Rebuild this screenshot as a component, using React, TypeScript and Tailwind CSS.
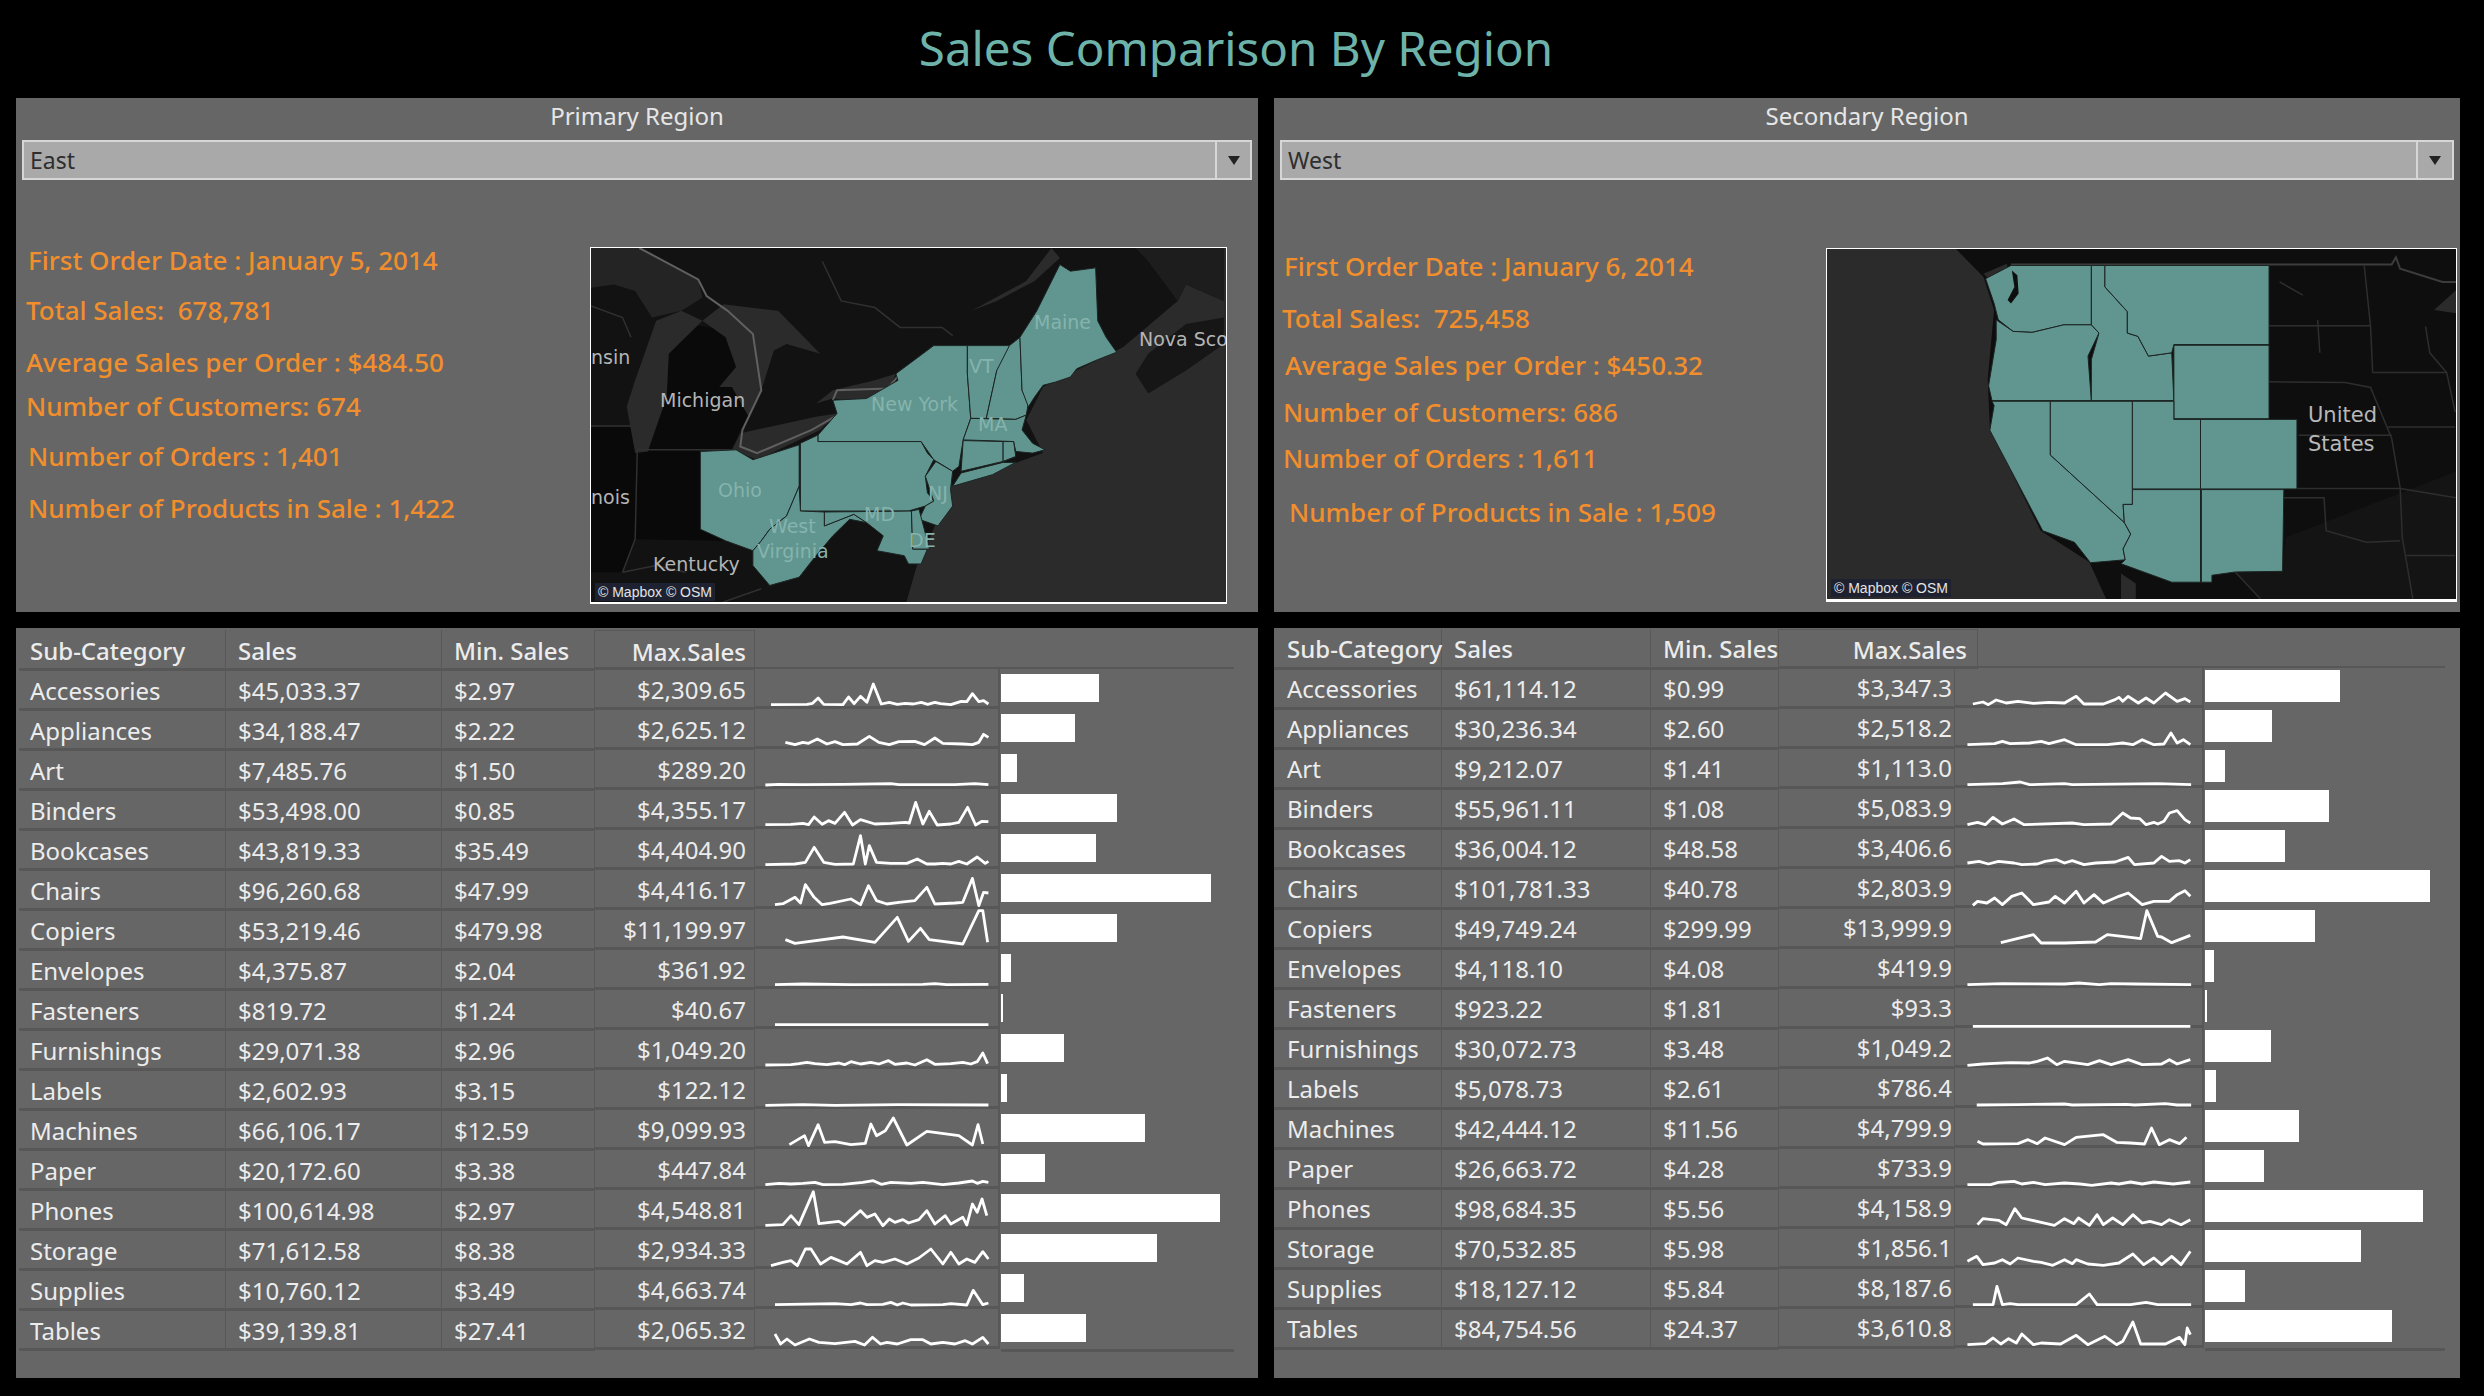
import React from 'react';

type Row = { name: string; sales: string; min: string; max: string; spark: string };

const eastRows: Row[] = [
  { name: 'Accessories', sales: '$45,033.37', min: '$2.97', max: '$2,309.65', spark: '960,107 1005,106 1012,103 1019,87 1026,106 1050,107 1057,84 1064,104 1072,82 1080,100 1088,45 1098,105 1108,100 1118,106 1128,103 1138,105 1148,100 1156,106 1165,100 1172,104 1185,107 1198,97 1205,98 1212,74 1220,98 1226,95 1232,105' },
  { name: 'Appliances', sales: '$34,188.47', min: '$2.22', max: '$2,625.12', spark: '978,100 990,107 1000,100 1007,103 1018,90 1030,105 1040,98 1050,107 1068,105 1083,82 1095,100 1108,107 1120,98 1140,97 1152,107 1165,87 1175,103 1200,105 1212,107 1220,100 1226,76 1232,85' },
  { name: 'Art', sales: '$7,485.76', min: '$1.50', max: '$289.20', spark: '953,108 970,106 1000,107 1050,106 1110,104 1120,107 1190,107 1215,104 1232,107' },
  { name: 'Binders', sales: '$53,498.00', min: '$0.85', max: '$4,355.17', spark: '953,107 985,106 1000,103 1007,107 1014,84 1024,106 1032,95 1040,103 1052,70 1062,108 1072,92 1090,105 1110,103 1128,100 1133,102 1141,40 1150,105 1158,67 1168,108 1185,105 1195,100 1206,55 1216,108 1224,97 1232,98' },
  { name: 'Bookcases', sales: '$43,819.33', min: '$35.49', max: '$4,404.90', spark: '953,107 990,105 1003,100 1014,55 1026,100 1040,106 1063,105 1072,20 1078,105 1083,50 1092,100 1110,103 1130,103 1143,90 1155,105 1165,105 1175,103 1185,105 1195,97 1205,105 1218,84 1228,103 1232,97' },
  { name: 'Chairs', sales: '$96,260.68', min: '$47.99', max: '$4,416.17', spark: '965,107 975,104 990,85 997,102 1003,47 1014,85 1024,107 1034,103 1060,90 1072,107 1082,50 1092,95 1105,105 1120,100 1140,95 1155,55 1165,105 1190,102 1200,100 1212,28 1220,110 1226,70 1232,72' },
  { name: 'Copiers', sales: '$53,219.46', min: '$479.98', max: '$11,199.97', spark: '978,92 990,103 1050,84 1090,100 1118,25 1132,97 1147,58 1158,92 1200,105 1220,5 1225,5 1231,100' },
  { name: 'Envelopes', sales: '$4,375.87', min: '$2.04', max: '$361.92', spark: '965,107 1000,105 1060,107 1150,106 1165,104 1180,107 1232,106' },
  { name: 'Fasteners', sales: '$819.72', min: '$1.24', max: '$40.67', spark: '965,107 1232,107' },
  { name: 'Furnishings', sales: '$29,071.38', min: '$2.96', max: '$1,049.20', spark: '953,108 985,107 995,104 1005,100 1015,104 1030,107 1045,102 1052,107 1060,98 1072,105 1085,100 1095,105 1107,95 1115,106 1130,102 1140,108 1155,92 1165,106 1185,104 1200,100 1210,105 1218,98 1225,72 1231,104' },
  { name: 'Labels', sales: '$2,602.93', min: '$3.15', max: '$122.12', spark: '953,109 1000,107 1040,109 1120,107 1232,108' },
  { name: 'Machines', sales: '$66,106.17', min: '$12.59', max: '$9,099.93', spark: '983,107 1002,80 1007,110 1019,47 1027,100 1040,98 1060,107 1078,103 1085,45 1092,80 1103,65 1113,27 1130,108 1155,67 1195,80 1212,108 1219,47 1225,105' },
  { name: 'Paper', sales: '$20,172.60', min: '$3.38', max: '$447.84', spark: '953,107 970,103 985,105 1000,103 1015,100 1025,107 1050,106 1075,100 1088,95 1098,106 1110,100 1135,103 1150,100 1175,107 1195,102 1212,96 1218,103 1225,97 1232,100' },
  { name: 'Phones', sales: '$100,614.98', min: '$2.97', max: '$4,548.81', spark: '953,109 975,107 985,80 995,107 1013,8 1020,104 1045,97 1052,108 1072,65 1080,85 1090,75 1100,110 1108,90 1115,100 1125,92 1132,102 1145,92 1155,65 1165,105 1178,80 1185,105 1200,85 1205,108 1212,45 1218,70 1224,30 1230,80' },
  { name: 'Storage', sales: '$71,612.58', min: '$8.38', max: '$2,934.33', spark: '960,110 975,100 985,95 993,110 1003,60 1010,60 1022,105 1035,85 1045,95 1055,105 1072,70 1080,110 1090,95 1100,100 1115,90 1130,105 1145,87 1160,60 1175,105 1185,70 1195,105 1205,90 1215,100 1225,68 1232,90' },
  { name: 'Supplies', sales: '$10,760.12', min: '$3.49', max: '$4,663.74', spark: '965,107 1040,104 1060,107 1072,102 1080,107 1100,106 1110,100 1118,108 1125,102 1135,108 1175,107 1185,104 1205,108 1213,64 1225,107 1232,102' },
  { name: 'Tables', sales: '$39,139.81', min: '$27.41', max: '$2,065.32', spark: '965,75 972,105 980,90 990,108 1008,90 1020,100 1040,104 1065,97 1077,108 1087,85 1097,105 1105,100 1118,105 1135,92 1150,92 1160,105 1175,100 1190,105 1203,95 1212,105 1225,85 1232,105' },
];

const westRows: Row[] = [
  { name: 'Accessories', sales: '$61,114.12', min: '$0.99', max: '$3,347.3', spark: '912,108 925,102 932,110 942,96 955,105 970,100 990,106 1010,103 1030,105 1045,85 1055,108 1080,108 1095,95 1100,88 1105,100 1112,85 1125,105 1135,90 1145,105 1160,75 1175,100 1185,92 1192,102' },
  { name: 'Appliances', sales: '$30,236.34', min: '$2.60', max: '$2,518.2', spark: '905,110 940,107 950,100 960,107 985,105 1000,100 1010,107 1030,95 1045,110 1085,110 1105,105 1118,110 1130,95 1145,110 1158,108 1167,75 1175,105 1183,95 1192,110' },
  { name: 'Art', sales: '$9,212.07', min: '$1.41', max: '$1,113.0', spark: '905,110 950,107 973,102 985,110 1030,107 1040,110 1150,107 1193,110' },
  { name: 'Binders', sales: '$55,961.11', min: '$1.08', max: '$5,083.9', spark: '905,110 918,103 928,110 938,88 950,108 965,93 978,110 1040,105 1055,110 1090,108 1105,75 1115,90 1127,92 1135,110 1145,103 1150,108 1158,100 1165,75 1175,68 1185,95 1192,105' },
  { name: 'Bookcases', sales: '$36,004.12', min: '$48.58', max: '$3,406.6', spark: '905,105 920,100 932,108 945,100 965,105 975,110 995,108 1005,100 1020,95 1030,105 1040,98 1055,110 1070,105 1095,102 1112,88 1120,110 1145,105 1155,85 1165,100 1178,98 1185,105 1192,95' },
  { name: 'Chairs', sales: '$101,781.33', min: '$40.78', max: '$2,803.9', spark: '912,112 918,100 930,105 940,90 950,110 962,85 975,75 990,110 1010,102 1018,85 1030,105 1045,70 1055,105 1068,80 1080,105 1100,85 1112,75 1130,110 1145,100 1165,100 1175,80 1185,68 1192,85' },
  { name: 'Copiers', sales: '$49,749.24', min: '$299.99', max: '$13,999.9', spark: '948,104 990,80 1000,105 1030,105 1070,102 1085,80 1115,88 1128,92 1136,8 1150,85 1155,87 1168,104 1192,82' },
  { name: 'Envelopes', sales: '$4,118.10', min: '$4.08', max: '$419.9', spark: '905,110 950,107 1030,108 1048,105 1075,110 1090,107 1120,108 1193,110' },
  { name: 'Fasteners', sales: '$923.22', min: '$1.81', max: '$93.3', spark: '912,115 1192,115' },
  { name: 'Furnishings', sales: '$30,072.73', min: '$3.48', max: '$1,049.2', spark: '905,112 925,108 940,106 960,104 985,105 995,100 1008,90 1020,110 1030,100 1060,110 1075,98 1090,110 1112,95 1130,110 1155,108 1165,95 1175,108 1185,100 1192,95' },
  { name: 'Labels', sales: '$5,078.73', min: '$2.61', max: '$786.4', spark: '917,111 970,110 1030,108 1040,111 1110,109 1120,111 1160,107 1175,111 1193,111' },
  { name: 'Machines', sales: '$42,444.12', min: '$11.56', max: '$4,799.9', spark: '918,100 925,108 970,107 983,95 995,107 1005,90 1030,110 1045,88 1080,80 1097,103 1115,105 1133,108 1142,60 1152,110 1165,95 1178,107 1187,88' },
  { name: 'Paper', sales: '$26,663.72', min: '$4.28', max: '$733.9', spark: '905,110 935,110 945,103 965,100 975,108 990,103 1005,110 1030,105 1050,108 1065,112 1090,105 1100,108 1115,102 1130,108 1145,102 1170,108 1192,102' },
  { name: 'Phones', sales: '$98,684.35', min: '$5.56', max: '$4,158.9', spark: '918,110 925,92 945,97 955,110 966,62 975,90 1000,103 1017,112 1030,92 1042,107 1048,90 1062,112 1072,80 1080,110 1092,90 1105,110 1118,80 1130,105 1140,100 1155,110 1165,95 1180,110 1192,95' },
  { name: 'Storage', sales: '$70,532.85', min: '$5.98', max: '$1,856.1', spark: '905,100 917,85 925,110 940,105 950,95 960,108 970,90 990,100 1000,103 1015,112 1030,95 1040,107 1045,95 1060,108 1080,112 1100,105 1118,78 1132,110 1145,90 1155,110 1168,85 1180,110 1192,70' },
  { name: 'Supplies', sales: '$18,127.12', min: '$5.84', max: '$8,187.6', spark: '912,110 938,110 943,55 950,110 960,107 970,110 1045,110 1062,78 1072,110 1115,110 1135,103 1150,110 1193,110' },
  { name: 'Tables', sales: '$84,754.56', min: '$24.37', max: '$3,610.8', spark: '905,110 928,107 938,90 948,108 958,92 968,105 975,78 990,110 1000,105 1025,108 1045,82 1060,110 1082,85 1097,110 1105,100 1118,42 1128,108 1160,108 1178,88 1185,110 1188,60 1192,80' },
];

const sans = 'font-["Noto_Sans",sans-serif]';

function Stat({ className, children }: { className: string; children: React.ReactNode }) {
  return <div className={`h-10 leading-[40px] text-[26px] font-medium whitespace-nowrap text-[#f28e2b] ${className}`}>{children}</div>;
}

function RegionSelect({ value, arrowClass }: { value: string; arrowClass: string }) {
  return (
    <div className="flex h-10 border-2 border-[#d6d6d6] bg-[#a9a9a9] text-[23px] leading-[36px] text-[#2e2e2e]">
      <div className="flex-1 pl-[6px]">{value}</div>
      <div className={`flex items-center justify-center border-l-2 border-[#d6d6d6] ${arrowClass}`}>
        <svg width="12" height="10" viewBox="0 0 12 10"><path d="M0 1h12L6 10z" fill="#222" /></svg>
      </div>
    </div>
  );
}

function MapLabel({ className, children }: { className: string; children: React.ReactNode }) {
  return <span className={`absolute font-["DejaVu_Sans",sans-serif] whitespace-nowrap leading-none ${className}`}>{children}</span>;
}

function Attribution({ className }: { className: string }) {
  return (
    <div className={`absolute left-[4px] flex h-[18px] w-[120px] items-center justify-center bg-[#1d2130] font-["Liberation_Sans",sans-serif] text-[14px] text-[#e4e4e4] ${className}`}>
      © Mapbox © OSM
    </div>
  );
}

const teal = '#60968f';
const edge = '#1c2423';

function States({ shapes }: { shapes: string[] }) {
  return (
    <>
      {shapes.map((pts) => (
        <polygon key={pts} points={pts} fill={teal} stroke={edge} strokeWidth="1" vectorEffect="non-scaling-stroke" />
      ))}
    </>
  );
}

function Lines({ lines, color, width }: { lines: string[]; color: string; width: number }) {
  return (
    <>
      {lines.map((pts) => (
        <polyline key={pts} points={pts} fill="none" stroke={color} strokeWidth={width} vectorEffect="non-scaling-stroke" />
      ))}
    </>
  );
}

function EastMap() {
  return (
    <div className="relative h-[357px] w-[637px] shrink-0 overflow-hidden border border-b-2 border-white bg-[#2b2b2b]">
      <svg className="block h-full w-full" viewBox="25 20 1510 1070" preserveAspectRatio="none">
        <polygon points="25,20 1530,20 1530,180 1440,130 1420,180 1290,320 1100,440 1060,540 1100,640 880,740 830,900 800,980 775,1090 25,1090" fill="#121212" />
        <polygon points="25,560 135,560 135,630 285,630 285,870 345,905 130,900 100,1000 25,1000" fill="#090909" />
        <polygon points="210,240 400,280 430,450 380,570 360,630 135,630 205,470 210,340" fill="#0a0a0a" />
        <polygon points="1210,20 1530,20 1530,180 1440,130 1420,180 1350,60 1320,20" fill="#1d1d1d" />
        <polygon points="1530,230 1440,250 1350,340 1320,400 1350,460 1440,390 1530,310" fill="#161616" />
        <polygon points="1120,20 1060,120 930,210 990,180 1080,120 1140,50" fill="#2b2b2b" />
        <polygon points="25,20 140,20 280,115 290,170 240,210 170,230 130,150 80,130 25,140" fill="#242424" />
        <polygon points="180,240 130,420 110,500 130,640 160,635 205,470 210,340 290,240 240,210" fill="#2b2b2b" />
        <polygon points="290,240 340,190 470,210 540,300 570,340 490,310 460,330 430,450 400,530 360,440 330,440 370,380 345,290" fill="#2b2b2b" />
        <polygon points="560,490 600,450 700,420 750,400 730,460 690,485 600,475" fill="#2b2b2b" />
        <polygon points="360,630 380,580 560,530 610,520 570,570 420,660" fill="#2b2b2b" />
        <Lines color="#606060" width={2} lines={['140,20 280,115 300,165 350,210 410,280 430,450 385,570 380,620 420,640 550,570 605,530', '600,480 610,450 730,445 760,400']} />
        <Lines color="#303030" width={1.5} lines={['25,558 120,558', '135,630 360,630', '135,630 130,900 100,1000', '575,60 620,180 700,200 760,260 860,260 885,285', '25,195 100,230 120,290', '250,1000 180,980 100,1000', '430,1050 340,1090']} />
        <States shapes={[
          '285,635 370,630 410,660 520,615 520,740 490,830 450,870 430,905 410,935 345,905 285,870',
          '523,610 565,585 565,605 810,605 825,640 840,660 820,710 825,760 840,785 820,800 780,815 523,815',
          '565,605 565,585 610,520 600,480 680,475 755,420 750,400 840,315 920,315 920,400 928,535 910,600 900,680 885,695 840,660 810,605',
          '885,740 905,700 1005,668 1035,668 980,705',
          '920,315 1020,315 1020,350 990,390 965,535 928,535 920,400',
          '1020,315 1045,290 1050,450 1065,490 1060,525 1035,538 965,535 990,390',
          '1045,290 1085,210 1140,70 1165,90 1225,80 1230,240 1250,290 1275,335 1225,360 1180,385 1165,410 1130,425 1100,435 1080,470 1065,500 1050,450',
          '928,535 1035,538 1060,525 1050,570 1075,610 1105,630 1075,640 1035,635 1030,605 910,600',
          '910,602 1005,605 1005,665 905,695',
          '1005,605 1030,605 1035,650 1005,665',
          '845,665 885,695 880,750 885,800 850,860 805,840 820,800 840,785 820,710',
          '430,905 450,870 490,830 520,740 523,815 580,818 580,860 650,825 680,850 640,840 600,890 560,950 520,1015 450,1040 410,980 410,935',
          '580,818 787,815 790,930 825,930 810,975 780,975 770,950 705,935 720,890 680,850 650,825 580,860',
          '787,815 805,810 830,930 790,930',
        ]} />
      </svg>
      <MapLabel className="left-0 top-[100px] text-[19px] text-[#b4b4b4]">nsin</MapLabel>
      <MapLabel className="left-[69px] top-[143px] text-[19px] text-[#b4b4b4]">Michigan</MapLabel>
      <MapLabel className="left-[280px] top-[147px] text-[19px] text-[#86b3ad]">New York</MapLabel>
      <MapLabel className="left-[443px] top-[65px] text-[19px] text-[#86b3ad]">Maine</MapLabel>
      <MapLabel className="left-[548px] top-[82px] text-[19px] text-[#b4b4b4]">Nova Sco</MapLabel>
      <MapLabel className="left-[378px] top-[109px] text-[19px] text-[#86b3ad]">VT</MapLabel>
      <MapLabel className="left-[387px] top-[167px] text-[19px] text-[#86b3ad]">MA</MapLabel>
      <MapLabel className="left-[127px] top-[233px] text-[19px] text-[#86b3ad]">Ohio</MapLabel>
      <MapLabel className="left-0 top-[240px] text-[19px] text-[#b4b4b4]">nois</MapLabel>
      <MapLabel className="left-[178px] top-[269px] text-[19px] text-[#86b3ad]">West</MapLabel>
      <MapLabel className="left-[166px] top-[294px] text-[19px] text-[#86b3ad]">Virginia</MapLabel>
      <MapLabel className="left-[337px] top-[236px] text-[19px] text-[#86b3ad]">NJ</MapLabel>
      <MapLabel className="left-[273px] top-[257px] text-[19px] text-[#86b3ad]">MD</MapLabel>
      <MapLabel className="left-[318px] top-[283px] text-[19px] text-[#86b3ad]">DE</MapLabel>
      <MapLabel className="left-[62px] top-[307px] text-[19px] text-[#b4b4b4]">Kentucky</MapLabel>
      <Attribution className="top-[335px]" />
    </div>
  );
}

function WestMap() {
  return (
    <div className="relative h-[354px] w-[631px] shrink-0 overflow-hidden border border-b-[3px] border-white bg-[#2b2b2b]">
      <svg className="block h-full w-full" viewBox="15 25 1487 1062" preserveAspectRatio="none">
        <polygon points="320,25 1502,25 1502,1087 675,1087 635,975 520,880 400,570 395,420 410,210 385,110" fill="#0e0e0e" />
        <polygon points="1100,900 1502,700 1502,1087 1040,1087 980,1005 1092,1003" fill="#141414" />
        <polygon points="1450,210 1502,150 1502,220" fill="#2b2b2b" />
        <polygon points="710,1010 745,1040 745,1087 710,1087" fill="#2b2b2b" />
        <polygon points="385,100 440,70 450,125 400,120" fill="#2b2b2b" />
        <Lines color="#3c3c3c" width={2} lines={['450,72 1350,72 1360,50 1370,85 1470,125 1502,125']} />
        <Lines color="#2e2e2e" width={1.5} lines={[
          '1060,258 1300,258',
          '1060,428 1240,430 1300,445 1350,600 1370,750 1375,900 1400,1087',
          '1285,75 1300,260 1305,400',
          '1305,400 1480,400',
          '1340,565 1500,565',
          '1130,590 1350,590',
          '1126,752 1370,752 1502,780',
          '1095,780 1190,780 1195,880 1290,915 1370,910',
          '1430,260 1440,340 1480,400 1500,520',
          '1385,955 1500,955',
          '980,1005 1040,1087',
          '1085,125 1140,165',
          '1175,240 1180,340',
        ]} />
        <States shapes={[
          '390,115 450,75 640,75 640,255 575,255 500,278 455,275 420,240 410,190',
          '415,240 455,275 500,278 575,255 640,255 658,280 632,350 640,485 405,485 397,440 415,300',
          '640,75 672,75 672,140 725,215 725,280 750,290 775,350 830,340 835,485 640,485 640,360 658,280 640,255',
          '672,75 1060,75 1060,315 835,315 830,340 775,350 750,290 725,280 725,215 672,140',
          '835,317 1060,317 1060,540 835,540',
          '405,487 543,487 543,650 718,855 733,890 715,935 720,968 638,977 600,915 525,880 480,770 400,575 410,500',
          '543,487 737,487 737,800 715,800 718,855 543,650',
          '737,487 835,487 835,542 898,542 898,753 737,753',
          '898,542 1126,542 1126,753 898,753',
          '737,755 898,755 898,1036 830,1036 710,980 720,968 715,935 733,890 718,855 715,800 737,800',
          '900,755 1095,755 1092,1003 980,1005 925,1015 925,1036 900,1036',
        ]} />
        <polygon points="452,90 465,105 468,160 450,190 442,180 458,140" fill="#0e0e0e" />
      </svg>
      <MapLabel className="left-[481px] top-[156px] text-[21px] text-[#b8b8b8]">United</MapLabel>
      <MapLabel className="left-[481px] top-[185px] text-[21px] text-[#b8b8b8]">States</MapLabel>
      <Attribution className="top-[330px]" />
    </div>
  );
}

const cellBase = 'h-10 border-b-[3px] border-r border-b-[#575757] border-r-[#585858] text-[24px] whitespace-nowrap text-[#ececec]';

function TextCol({ head, values, width, pad, lead, headLead }: { head: string; values: string[]; width: string; pad: string; lead: string; headLead: string }) {
  return (
    <div className={`shrink-0 ${width}`}>
      <div className={`${cellBase} ${pad} ${headLead} h-[41px] text-[23.5px] font-medium`}>{head}</div>
      {values.map((v) => <div key={v} className={`${cellBase} ${pad} ${lead}`}>{v}</div>)}
    </div>
  );
}

function Sparkline({ points, box, width }: { points: string; box: string; width: string }) {
  return (
    <div className={`h-10 border-b-[3px] border-r-2 border-b-[#575757] border-r-[#585858] ${width}`}>
      <svg className="block h-[40px] w-full" viewBox={box} preserveAspectRatio="none">
        <polyline points={points} fill="none" stroke="#fff" strokeWidth="2.8" strokeLinejoin="round" vectorEffect="non-scaling-stroke" />
      </svg>
    </div>
  );
}

function Bars({ rows, scale, barClass }: { rows: Row[]; scale: number; barClass: string }) {
  return (
    <div className="border-b-[3px] border-[#575757]">
      {rows.map((r) => (
        <div key={r.name} className={`flex h-10 ${barClass}`}>
          <div className="h-full bg-white" style={{ width: Math.max(2, (parseFloat(r.sales.replace(/[$,]/g, '')) / 1000) * scale) }} />
        </div>
      ))}
    </div>
  );
}

function SalesTable({ rows, side }: { rows: Row[]; side: 'east' | 'west' }) {
  const east = side === 'east';
  const lead = east ? 'leading-[40px]' : 'leading-[38px]';
  const headLead = east ? 'leading-[41px]' : 'leading-[39px]';
  return (
    <div className={`flex h-[750px] bg-[#666666] ${east ? 'pl-[3px] pt-[2px]' : 'pt-px'}`}>
      <TextCol head="Sub-Category" values={rows.map((r) => r.name)} width={east ? 'w-[207px]' : 'w-[168px]'} pad={east ? 'pl-[11px]' : 'pl-[13px]'} lead={lead} headLead={headLead} />
      <TextCol head="Sales" values={rows.map((r) => r.sales)} width={east ? 'w-[216px]' : 'w-[209px]'} pad="pl-3" lead={lead} headLead={headLead} />
      <TextCol head="Min. Sales" values={rows.map((r) => r.min)} width={east ? 'w-[153px]' : 'w-[128px]'} pad="pl-3" lead={lead} headLead={headLead} />

      {/* max column sits a hair higher, it is its own sheet in the dashboard */}
      <div className={`shrink-0 ${east ? 'w-[160px]' : 'w-[176px]'}`}>
        <div className={`${cellBase} ${headLead} h-10 border-t border-t-[#585858] text-right text-[23.5px] font-medium ${east ? 'pr-2' : '-mr-[23px] pr-[10px]'}`}>Max.Sales</div>
        {rows.map((r) => <div key={r.name} className={`${cellBase} ${lead} text-right ${east ? 'pr-2' : 'pr-[2px]'}`}>{r.max}</div>)}
      </div>

      <div className={`flex-1 ${east ? 'mr-6 mt-[37px]' : 'mr-[15px] mt-[37px]'}`}>
        <div className="flex border-t-2 border-[#575757]">
          <div className="shrink-0">
            {rows.map((r) => (
              <Sparkline
                key={r.name}
                points={r.spark}
                box={east ? '940 0 304 120' : '889 0 318 120'}
                width={east ? 'w-[245px]' : 'w-[249px]'}
              />
            ))}
          </div>
          <div className="ml-px flex-1">
            <Bars rows={rows} scale={east ? 2.177 : 2.21} barClass={east ? 'pt-[5px] pb-[7px]' : 'pt-[2px] pb-[6px]'} />
          </div>
        </div>
      </div>
    </div>
  );
}

export default function App() {
  return (
    <div className={`h-[1396px] w-[2484px] overflow-hidden bg-black ${sans}`}>
      <div className="flex h-[98px] items-center justify-center pb-[2px] pr-3 text-[47.5px] text-[#6db3a9]">Sales Comparison By Region</div>

      <div className="flex gap-4 pl-4">
        <div className="flex w-[1242px] flex-col gap-4">
          <div className="h-[514px] bg-[#666666]">
            <div className="flex h-[42px] items-center justify-center pb-[6px] text-[24px] text-[#e6e6e6]">Primary Region</div>
            <div className="ml-[6px] w-[1230px]"><RegionSelect value="East" arrowClass="w-[35px]" /></div>
            <div className="flex">
              <div className="w-[574px] shrink-0 pt-[60px]">
                <Stat className="pl-3">First Order Date : January 5, 2014</Stat>
                <Stat className="mt-[10px] pl-[10px]">Total Sales:&nbsp; 678,781</Stat>
                <Stat className="mt-3 pl-[10px]">Average Sales per Order : $484.50</Stat>
                <Stat className="mt-1 pl-[10px]">Number of Customers: 674</Stat>
                <Stat className="mt-[10px] pl-3">Number of Orders : 1,401</Stat>
                <Stat className="mt-3 pl-3">Number of Products in Sale : 1,422</Stat>
              </div>
              <div className="mt-[67px]"><EastMap /></div>
            </div>
          </div>
          <SalesTable rows={eastRows} side="east" />
        </div>

        <div className="flex w-[1186px] flex-col gap-4">
          <div className="h-[514px] bg-[#666666]">
            <div className="flex h-[42px] items-center justify-center pb-[6px] text-[24px] text-[#e6e6e6]">Secondary Region</div>
            <div className="ml-[6px] w-[1174px]"><RegionSelect value="West" arrowClass="w-[36px]" /></div>
            <div className="flex">
              <div className="w-[552px] shrink-0 pt-[66px]">
                <Stat className="pl-[10px]">First Order Date : January 6, 2014</Stat>
                <Stat className="mt-3 pl-2">Total Sales:&nbsp; 725,458</Stat>
                <Stat className="mt-[7px] pl-[11px]">Average Sales per Order : $450.32</Stat>
                <Stat className="mt-[7px] pl-[9px]">Number of Customers: 686</Stat>
                <Stat className="mt-[6px] pl-[9px]">Number of Orders : 1,611</Stat>
                <Stat className="mt-[14px] pl-[15px]">Number of Products in Sale : 1,509</Stat>
              </div>
              <div className="mt-[68px]"><WestMap /></div>
            </div>
          </div>
          <SalesTable rows={westRows} side="west" />
        </div>
      </div>
    </div>
  );
}
